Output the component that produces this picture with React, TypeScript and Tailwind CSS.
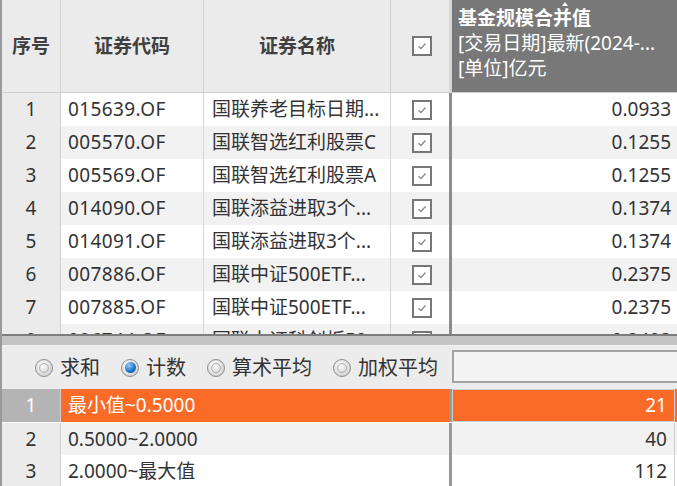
const rows = [
  ["1", "015639.OF", "国联养老目标日期...", "0.0933"],
  ["2", "005570.OF", "国联智选红利股票C", "0.1255"],
  ["3", "005569.OF", "国联智选红利股票A", "0.1255"],
  ["4", "014090.OF", "国联添益进取3个...", "0.1374"],
  ["5", "014091.OF", "国联添益进取3个...", "0.1374"],
  ["6", "007886.OF", "国联中证500ETF...", "0.2375"],
  ["7", "007885.OF", "国联中证500ETF...", "0.2375"],
  ["8", "006744.OF", "国联中证科创板50...", "0.2403"],
];

const stats = [
  ["1", "最小值~0.5000", "21"],
  ["2", "0.5000~2.0000", "40"],
  ["3", "2.0000~最大值", "112"],
];

const CheckBox = () => (
  <div className="w-[20px] h-[20px] border-2 border-[#777] bg-white flex items-center justify-center ml-[4px]">
    <svg width="10" height="8" viewBox="0 0 10 8">
      <path d="M1.5 4.2 L4 6.5 L8.5 1.5" fill="none" stroke="#8a8a8a" strokeWidth="1.3" />
    </svg>
  </div>
);

const Radio = ({ on, label }: { on?: boolean; label: string }) => (
  <div className="flex items-center gap-[7px]">
    <div className="w-[18px] h-[18px] rounded-full border border-[#8f8f8f] bg-[radial-gradient(circle_at_40%_35%,#ffffff,#c4c4c4)] flex items-center justify-center">
      {on ? (
        <div className="w-[11px] h-[11px] rounded-full bg-[radial-gradient(circle_at_35%_30%,#8fd0ff,#1a6fc0_60%,#0b4f95)]" />
      ) : (
        <div className="w-[10px] h-[10px] rounded-full bg-[radial-gradient(circle_at_40%_35%,#ffffff,#cdcdcd)] border border-[#b0b0b0]" />
      )}
    </div>
    <span className="text-[20px]">{label}</span>
  </div>
);

export default function App() {
  return (
    <div className="w-[677px] h-[486px] overflow-hidden bg-[#ececec] border-l-2 border-[#9a9a9a] font-['Noto_Sans','Noto_Sans_CJK_SC',sans-serif] text-[19px] text-[#333]">
      <div className="h-[334px] overflow-hidden">
        <div className="flex h-[93px] border-b border-[#cfcfcf] bg-[#ebebeb] font-bold text-[#404040]">
          <div className="w-[59px] border-r border-[#cfcfcf] flex items-center justify-center">序号</div>
          <div className="w-[143px] border-r border-[#cfcfcf] flex items-center justify-center">证券代码</div>
          <div className="w-[187px] border-r border-[#cfcfcf] flex items-center justify-center">证券名称</div>
          <div className="w-[61px] border-r-[3px] border-[#d6d6d6] flex items-center justify-center">
            <CheckBox />
          </div>
          <div className="relative flex-1 bg-[#787878] text-white px-[6px] pt-[6px] leading-[25px] font-normal whitespace-nowrap">
            <div className="absolute left-[110px] top-[2px] w-0 h-0 border-l-[3px] border-r-[3px] border-b-[4px] border-l-transparent border-r-transparent border-b-white" />
            <div className="font-bold">基金规模合并值</div>
            <div>[交易日期]最新(2024-...</div>
            <div>[单位]亿元</div>
          </div>
        </div>
        {rows.map((r, i) => (
          <div key={r[0]} className={`flex h-[33px] items-center ${i % 2 ? "bg-[#f2f2f2]" : "bg-white"}`}>
            <div className="w-[59px] h-full bg-[#ebebeb] border-r border-[#cfcfcf] flex items-center justify-center">{r[0]}</div>
            <div className="w-[143px] h-full border-r border-[#d6d6d6] flex items-center pl-[7px] tracking-[0.4px]">{r[1]}</div>
            <div className="w-[187px] h-full border-r border-[#d6d6d6] flex items-center pl-[8px] whitespace-nowrap overflow-hidden">{r[2]}</div>
            <div className="w-[61px] h-full border-r-[3px] border-[#8c8c8c] flex items-center justify-center">
              <CheckBox />
            </div>
            <div className="flex-1 h-full flex items-center justify-end pr-[6px]">{r[3]}</div>
          </div>
        ))}
      </div>
      <div className="h-[12px] border-t-2 border-[#7d7d7d] border-b border-b-[#f4f4f4] bg-[#c4c4c4]" />
      <div className="flex h-[43px] items-center">
        <div className="flex items-center gap-[21px] pl-[33px] w-[450px]">
          <Radio label="求和" />
          <Radio on label="计数" />
          <Radio label="算术平均" />
          <Radio label="加权平均" />
        </div>
        <div className="flex-1 h-[33px] mt-[-3px] border-2 border-[#a3a3a3] border-r-0 bg-[#f4f4f4]" />
      </div>
      {stats.map((s, i) => (
        <div
          key={s[0]}
          className={`flex h-[33px] ${i === 0 ? "bg-[#fb6b28] text-white" : i === 1 ? "bg-[#f2f2f2] border-t border-white" : "bg-white"}`}
        >
          <div className={`w-[59px] border-r border-[#cfcfcf] flex items-center justify-center ${i === 0 ? "bg-[#b4b4b4] text-white" : "bg-[#ebebeb] text-[#333]"}`}>
            {s[0]}
          </div>
          <div className="w-[388px] flex items-center pl-[7px]">{s[1]}</div>
          <div className="w-[3px] bg-[#999]" />
          <div className={`flex-1 flex items-center justify-end pr-[7px] mr-[2px] border-r border-[#cfcfcf] ${i === 0 ? "border border-[#5b1f00]" : ""}`}>
            {s[2]}
          </div>
        </div>
      ))}
    </div>
  );
}
